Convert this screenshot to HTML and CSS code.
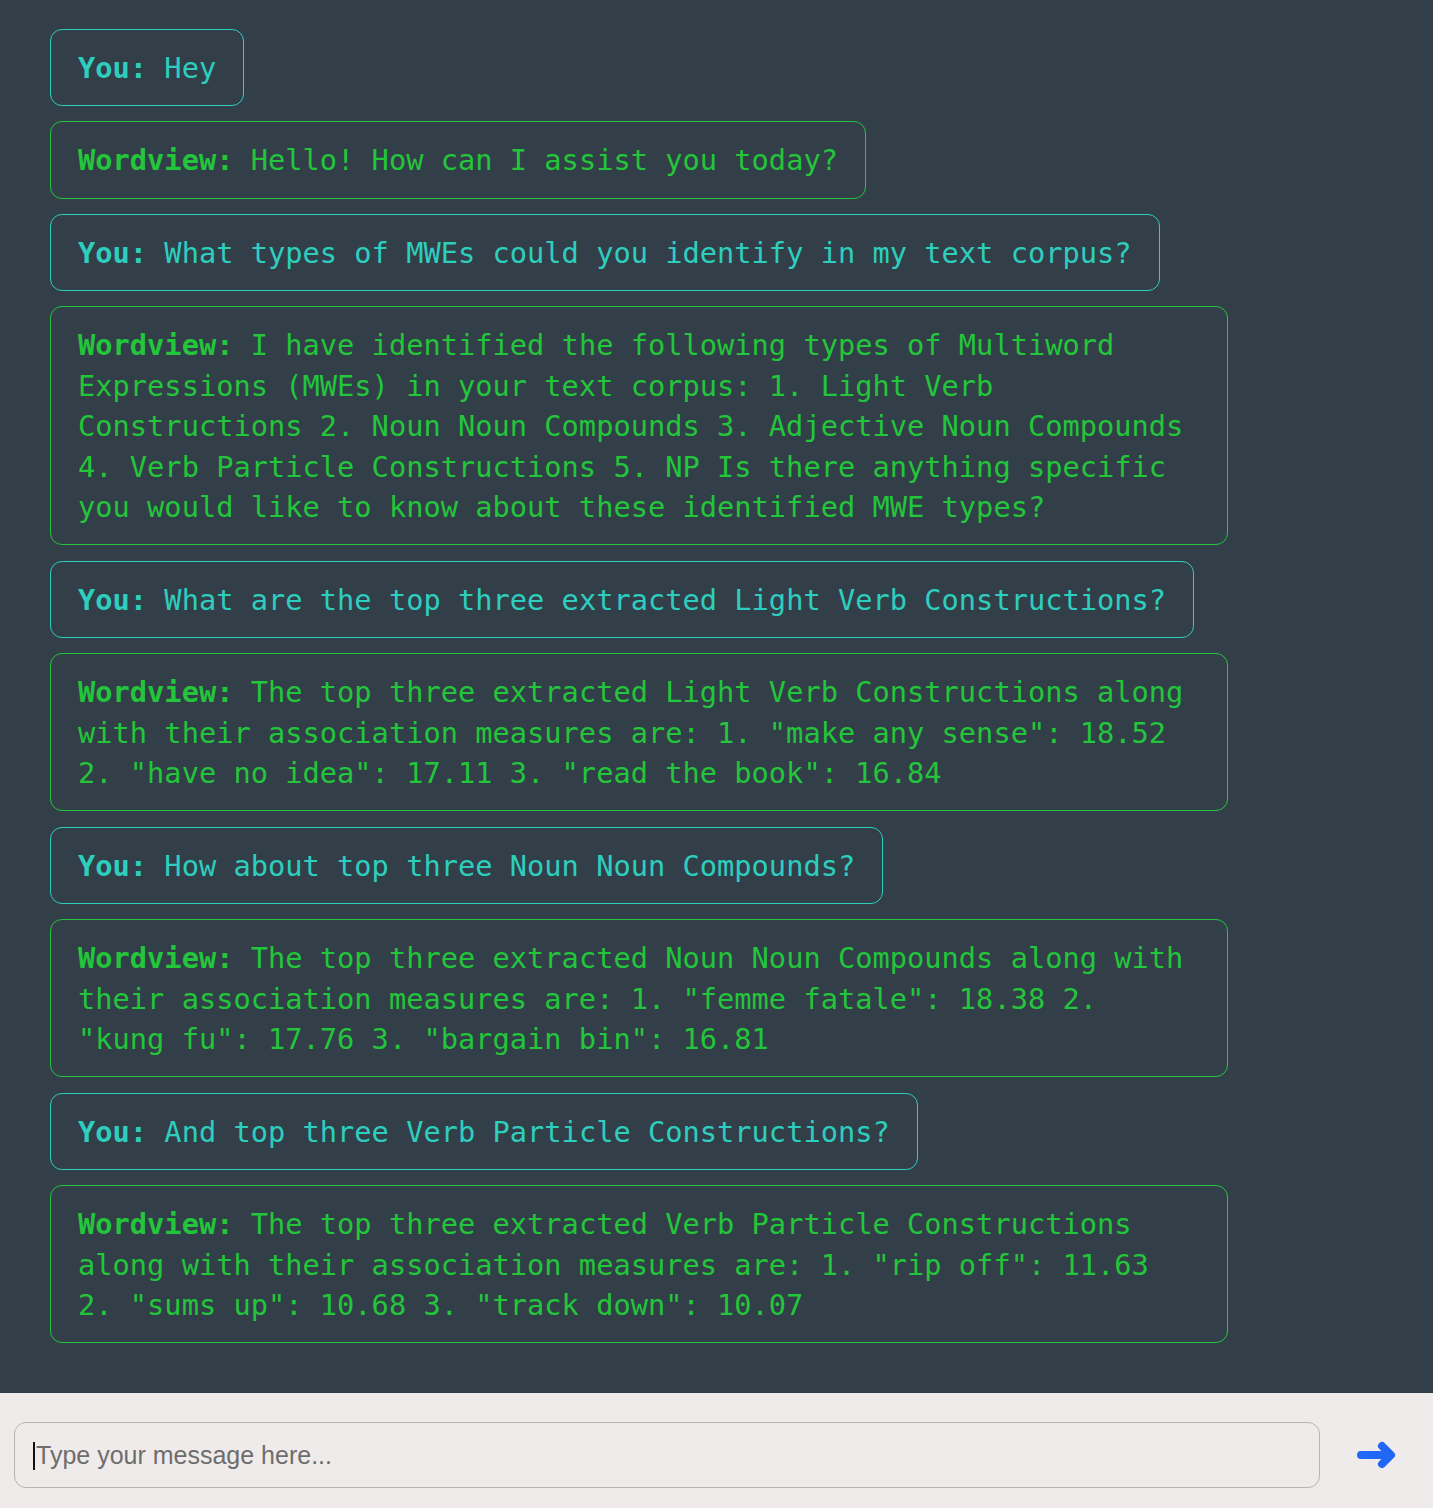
FILE: index.html
```html
<!DOCTYPE html>
<html lang="en">
<head>
<meta charset="utf-8">
<title>Wordview Chat</title>
<link rel="stylesheet" href="styles.css">
</head>
<body>
<div class="app">
  <main class="chat">
    <div class="msg user"><b>You:</b> Hey</div>
    <div class="msg bot"><b>Wordview:</b> Hello! How can I assist you today?</div>
    <div class="msg user"><b>You:</b> What types of MWEs could you identify in my text corpus?</div>
    <div class="msg bot"><b>Wordview:</b> I have identified the following types of Multiword Expressions (MWEs) in your text corpus: 1. Light Verb Constructions 2. Noun Noun Compounds 3. Adjective Noun Compounds 4. Verb Particle Constructions 5. NP Is there anything specific you would like to know about these identified MWE types?</div>
    <div class="msg user"><b>You:</b> What are the top three extracted Light Verb Constructions?</div>
    <div class="msg bot"><b>Wordview:</b> The top three extracted Light Verb Constructions along with their association measures are: 1. "make any sense": 18.52 2. "have no idea": 17.11 3. "read the book": 16.84</div>
    <div class="msg user"><b>You:</b> How about top three Noun Noun Compounds?</div>
    <div class="msg bot"><b>Wordview:</b> The top three extracted Noun Noun Compounds along with their association measures are: 1. "femme fatale": 18.38 2. "kung fu": 17.76 3. "bargain bin": 16.81</div>
    <div class="msg user"><b>You:</b> And top three Verb Particle Constructions?</div>
    <div class="msg bot"><b>Wordview:</b> The top three extracted Verb Particle Constructions along with their association measures are: 1. "rip off": 11.63 2. "sums up": 10.68 3. "track down": 10.07</div>
  </main>
  <footer class="composer">
    <div class="input-wrap">
      <input class="input" type="text" placeholder="Type your message here...">
      <span class="caret"></span>
    </div>
    <button class="send" type="button" aria-label="Send">
      <svg width="40" height="30" viewBox="0 0 40 30">
        <path d="M5 15 H34 M26 6 L35 15 L26 24" fill="none" stroke="#2167f5" stroke-width="8" stroke-linecap="round" stroke-linejoin="round"/>
      </svg>
    </button>
  </footer>
</div>
</body>
</html>
```
FILE: styles.css
```css
* { box-sizing: border-box; }
html, body { margin: 0; padding: 0; }
body {
  background: #323f49;
  width: 1433px;
  height: 1508px;
  overflow: hidden;
}
.app {
  display: flex;
  flex-direction: column;
  height: 1508px;
}
.chat {
  height: 1393px;
  flex: none;
  background: #323f49;
  padding: 28.5px 0 0 50px;
  display: flex;
  flex-direction: column;
  align-items: flex-start;
  gap: 15.2px;
}
.msg {
  max-width: 1178px;
  border: 1px solid;
  border-radius: 12px;
  padding: 18px 27px 17px 27px;
  font-family: "DejaVu Sans Mono", "Liberation Mono", monospace;
  font-size: 28.7px;
  line-height: 40.4px;
}
.msg b { font-weight: bold; }
.user { color: #2ecebf; border-color: #2ecebf; }
.bot { color: #23c53a; border-color: #23c53a; }

.composer {
  flex: 1;
  background: #eeebea;
  display: flex;
  align-items: flex-start;
  padding: 29px 0 0 14px;
}
.input-wrap {
  position: relative;
  width: 1306px;
  height: 66px;
}
.input {
  width: 100%;
  height: 100%;
  border: 1px solid #b7b4b3;
  border-radius: 12px;
  background: #eeebea;
  padding: 0 0 0 21px;
  font-family: "Liberation Sans", Arial, sans-serif;
  font-size: 25px;
  color: #333;
  outline: none;
}
.input::placeholder { color: #6e6d6d; }
.caret {
  position: absolute;
  left: 19px;
  top: 20px;
  width: 2px;
  height: 28px;
  background: #111;
}
.send {
  margin: 18px 0 0 36px;
  padding: 0;
  border: 0;
  background: none;
  width: 40px;
  height: 30px;
  display: flex;
}
```
